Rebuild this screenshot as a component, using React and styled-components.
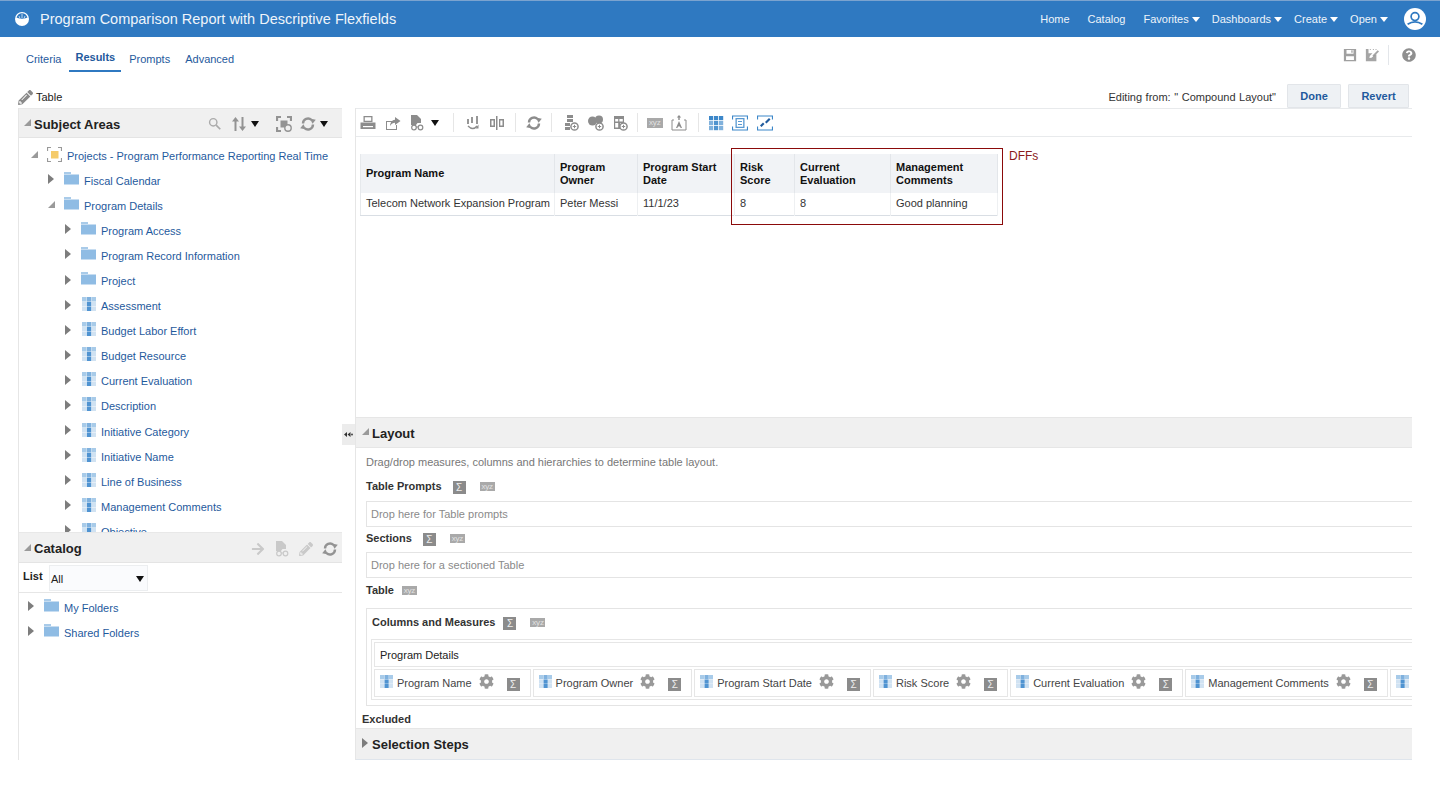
import styled, { createGlobalStyle } from 'styled-components';
import { FaCog, FaArrowRight, FaPencilAlt, FaQuestionCircle } from 'react-icons/fa';

const GlobalStyle = createGlobalStyle`
  html, body {
    margin: 0;
    padding: 0;
    background: #fff;
    font-family: "Liberation Sans", Arial, sans-serif;
    font-size: 11px;
    color: #333;
  }
  * { box-sizing: border-box; }
`;

const Page = styled.div`
  width: 1440px;
  height: 788px;
  overflow: hidden;
  background: #fff;
`;

const TopBar = styled.header`
  height: 37px;
  background: #2f79c1;
  border-top: 1px solid #7ba3cf;
  display: flex;
  align-items: center;
  padding: 0 14px 0 15px;
  color: #fff;
`;

const ReportTitle = styled.div`
  font-size: 14.5px;
  margin-left: 11px;
  color: #eef4fa;
  flex: 1;
`;

const Nav = styled.nav`
  display: flex;
  align-items: center;
  gap: 12px;
  margin-right: 16px;
  font-size: 11px;
`;

const NavItem = styled.span`
  display: inline-flex;
  align-items: center;
  gap: 3px;
  color: #eef4fa;
  margin-right: ${(p) => (p.$plain ? '6px' : '0')};
`;

const NavCaret = styled.i`
  width: 0;
  height: 0;
  border-left: 4px solid transparent;
  border-right: 4px solid transparent;
  border-top: 5px solid #fff;
`;

const TabBar = styled.div`
  height: 35px;
  display: flex;
  align-items: flex-end;
  justify-content: space-between;
  padding: 0 24px 0 19px;
`;

const Tabs = styled.div`
  display: flex;
  align-items: flex-end;
  gap: 1px;
`;

const Tab = styled.div`
  height: ${(p) => (p.$active ? '27px' : '23px')};
  padding: ${(p) => (p.$active ? '6px 6px 0' : '8px 7px 0')};
  font-size: 11px;
  font-weight: ${(p) => (p.$active ? 700 : 400)};
  color: #1f5a9d;
  border-bottom: 2px solid ${(p) => (p.$active ? '#2f79c1' : 'transparent')};
  margin-bottom: ${(p) => (p.$active ? '0' : '4px')};
  white-space: nowrap;
`;

const PageTools = styled.div`
  align-self: flex-start;
  margin-top: 8px;
  display: flex;
  align-items: center;
  gap: 8px;
  color: #8f8f8f;
`;

const ToolDivider = styled.span`
  width: 1px;
  height: 20px;
  background: #e3e6ea;
  margin: 0 5px 0 1px;
`;

const EditBar = styled.div`
  height: 36px;
  display: flex;
  align-items: flex-end;
  justify-content: space-between;
  padding: 0 31px 0 18px;
`;

const EditTitle = styled.div`
  display: flex;
  align-items: center;
  gap: 3px;
  height: 36px;
  padding-top: 14px;
  font-size: 11px;
  color: #222;
  svg { color: #8a8a8a; }
`;

const EditActions = styled.div`
  display: flex;
  align-items: center;
  color: #333;
`;

const EditingFrom = styled.span`
  margin: 2px 11px 0 0;
  word-spacing: 0.5px;
`;

const ActionButton = styled.button`
  height: 24px;
  width: ${(p) => p.$w}px;
  margin-left: ${(p) => p.$gap || 0}px;
  background: #eef1f4;
  border: 1px solid #e2e5e9;
  border-radius: 1px;
  font: 700 11px "Liberation Sans", Arial, sans-serif;
  color: #1f5a9d;
`;

const Main = styled.main`
  display: grid;
  grid-template-columns: 324px 13px 1057px;
  margin-left: 18px;
  height: 652px;
`;

const LeftPanel = styled.aside`
  border-left: 1px solid #e6e6e6;
  display: flex;
  flex-direction: column;
  min-height: 0;
`;

const PanelHeader = styled.div`
  height: ${(p) => p.$h || 30}px;
  flex: none;
  display: flex;
  align-items: center;
  background: #f0f0f0;
  border-top: 1px solid #e8e8e8;
  border-bottom: 1px solid #e4e4e4;
  padding: 2px 0 0 5px;
`;

const PanelTitle = styled.div`
  font-size: 13px;
  font-weight: 700;
  color: #222;
  margin-left: 3px;
  flex: ${(p) => (p.$grow ? 1 : 'none')};
`;

const HeaderTools = styled.div`
  display: flex;
  align-items: center;
  color: ${(p) => (p.$muted ? '#c9c9c9' : '#939393')};
`;

const HeaderTool = styled.span`
  width: 24px;
  display: flex;
  justify-content: center;
  color: ${(p) => p.$color || 'inherit'};
`;

const SmallCaret = styled.i`
  width: 0;
  height: 0;
  margin: ${(p) => p.$margin || '0 0 0 1px'};
  border-left: 4.5px solid transparent;
  border-right: 4.5px solid transparent;
  border-top: 6px solid #111;
`;

const Tree = styled.div`
  height: 394px;
  overflow: hidden;
  flex: none;
  padding-top: 5px;
`;

const TreeRow = styled.div`
  height: 25.1px;
  display: flex;
  align-items: center;
  padding-left: ${(p) => p.$indent}px;
  white-space: nowrap;
`;

const Arrow = styled.i`
  width: 0;
  height: 0;
  flex: none;
  margin-top: -3px;
  ${(p) =>
    p.$open
      ? `border-left: 7px solid transparent; border-bottom: 7px solid #9a9a9a;`
      : `border-top: 5px solid transparent; border-bottom: 5px solid transparent; border-left: 6px solid #7d7d7d; margin-right: 1px;`}
`;

const NodeIcon = styled.span`
  width: 15px;
  height: 15px;
  margin: -3px 5px 0 9px;
  flex: none;
  display: flex;
  justify-content: center;
`;

const NodeLabel = styled.span`
  font-size: 11px;
  color: #1f5a9d;
`;

const CatalogFilter = styled.div`
  height: 30px;
  flex: none;
  display: flex;
  align-items: center;
  padding-left: 4px;
  border-bottom: 1px solid #e6e6e6;
`;

const FilterLabel = styled.span`
  font-weight: 700;
  color: #222;
  width: 26px;
  margin-top: -3px;
`;

const FilterSelect = styled.div`
  width: 99px;
  height: 26px;
  background: #fafbfd;
  border: 1px solid #eceef0;
  display: flex;
  align-items: center;
  justify-content: space-between;
  padding: 2px 2px 0 1px;
  color: #222;
`;

const CatalogList = styled.div`
  padding-top: 2px;
`;

const Splitter = styled.div`
  align-self: center;
  height: 21px;
  background: #ececec;
  display: flex;
  align-items: center;
  justify-content: center;
  color: #333;
`;

const RightPanel = styled.section`
  border-left: 1px solid #e6e6e6;
  min-width: 0;
  overflow: hidden;
`;

const Toolbar = styled.div`
  height: 29px;
  display: flex;
  align-items: center;
  border-top: 1px solid #e8eaec;
  border-bottom: 1px solid #e8eaec;
  color: #8c8c8c;
`;

const ToolButton = styled.span`
  width: 24.5px;
  height: 16px;
  flex: none;
  display: flex;
  align-items: center;
  justify-content: center;
  color: ${(p) => (p.$blue ? '#3c87c9' : 'inherit')};
`;

const ToolSep = styled.span`
  width: 1px;
  height: 19px;
  flex: none;
  background: #e6e6e6;
  margin: 0 ${(p) => p.$r}px 0 ${(p) => p.$l}px;
`;

const ReportCanvas = styled.div`
  position: relative;
  height: 280px;
  padding: 17px 0 0 4px;
`;

const ResultTable = styled.table`
  border-collapse: collapse;
  table-layout: fixed;
  width: 637px;
  border-bottom: 1px solid #d9dee4;
  border-left: 1px solid #e6e9ec;
  font-size: 11px;
  th {
    height: 39px;
    background: #f1f3f6;
    border-right: 1px solid #e3e6ea;
    font-weight: 700;
    color: #111;
    text-align: left;
    padding: 0 5px;
    line-height: 13px;
  }
  td {
    height: 22px;
    border-right: 1px solid #eef0f2;
    color: #333;
    padding: 0 5px 2px;
    white-space: nowrap;
  }
`;

const Highlight = styled.div`
  position: absolute;
  left: 375px;
  top: 11px;
  width: 272px;
  height: 77px;
  border: 1px solid #8b0a0a;
  pointer-events: none;
`;

const HighlightNote = styled.div`
  position: absolute;
  left: 653px;
  top: 12px;
  font-size: 12px;
  color: #8b1a1a;
`;

const SectionHeader = styled.div`
  height: ${(p) => p.$h}px;
  display: flex;
  align-items: center;
  background: #f0f0f0;
  border-top: 1px solid #e6e6e6;
  border-bottom: 1px solid ${(p) => p.$line || '#e6e6e6'};
  padding: ${(p) => p.$top || 0}px 0 0 6px;
`;

const LayoutBody = styled.div`
  padding-left: 10px;
`;

const Hint = styled.div`
  height: 27px;
  display: flex;
  align-items: center;
  color: #777;
`;

const DropLabel = styled.div`
  height: ${(p) => p.$h || 26}px;
  padding-top: ${(p) => p.$top || 4}px;
  display: flex;
  align-items: flex-start;
  font-weight: 700;
  color: #333;
  line-height: 14px;
`;

const DropZone = styled.div`
  height: 26px;
  border: 1px solid #e4e4e4;
  border-right: 0;
  display: flex;
  align-items: center;
  padding-left: 4px;
  color: #8a8a8a;
`;

const Sigma = styled.span`
  width: 13px;
  height: 13px;
  margin: ${(p) => p.$margin || '2px 0 0 11px'};
  flex: none;
  background: #8b8b8b;
  color: #eee;
  font-size: 10px;
  font-weight: 400;
  line-height: 13px;
  text-align: center;
`;

const Xyz = styled.span`
  width: ${(p) => p.$w || 15}px;
  height: ${(p) => p.$tall || 9}px;
  margin: ${(p) => p.$margin || '3px 0 0 14px'};
  flex: none;
  background: #a9a9a9;
  color: #e2e2e2;
  font-size: 8px;
  font-weight: 400;
  line-height: ${(p) => p.$tall || 9}px;
  text-align: center;
  letter-spacing: -0.2px;
`;

const ColumnsBox = styled.div`
  height: 98px;
  border: 1px solid #e4e4e4;
  border-right: 0;
  padding-left: 4px;
`;

const ColumnsLabel = styled(DropLabel)`
  height: 30px;
  padding: 6px 0 0 1px;
`;

const DetailsBox = styled.div`
  border: 1px solid #e6e6e6;
  border-right: 0;
  padding: 2px 0 2px 2px;
  height: 61px;
  overflow: hidden;
`;

const DetailsHeader = styled.div`
  height: 25px;
  border: 1px solid #e6e6e6;
  border-right: 0;
  display: flex;
  align-items: center;
  padding-left: 5px;
  color: #222;
`;

const ColumnRow = styled.div`
  display: flex;
  gap: 2px;
  margin-top: 2px;
`;

const ColumnChip = styled.div`
  height: 28px;
  flex: none;
  border: 1px solid #e6e6e6;
  display: flex;
  align-items: center;
  padding: 0 10px 0 5px;
  color: #444;
  white-space: nowrap;
`;

const ChipIcon = styled.span`
  width: 13px;
  height: 13px;
  margin: -3px 4px 0 0;
  display: flex;
`;

const ChipGear = styled.span`
  display: flex;
  margin: -4px 0 0 7px;
  color: #999;
`;

const ExcludedLabel = styled.div`
  height: 22px;
  margin-left: -4px;
  display: flex;
  align-items: center;
  font-weight: 700;
  color: #333;
  padding-top: 4px;
`;

const Svg = ({ size = 16, children }) => (
  <svg width={size} height={size} viewBox="0 0 16 16" fill="currentColor">
    {children}
  </svg>
);

const Logo = () => (
  <svg width="14" height="14" viewBox="0 0 14 14">
    <circle cx="7" cy="7" r="7" fill="#fff" />
    <path d="M1.5 5.5 Q7 8 12.5 5.5 Q11 1.2 7 1.2 Q3 1.2 1.5 5.5Z" fill="#2f79c1" />
    <path d="M7 2v4M4 4l1 2.5M10 4l-1 2.5" stroke="#fff" strokeWidth="0.7" />
  </svg>
);

const Avatar = () => (
  <svg width="22" height="22" viewBox="0 0 22 22">
    <circle cx="11" cy="11" r="11" fill="#fff" />
    <circle cx="11" cy="8.6" r="3.9" fill="none" stroke="#2f79c1" strokeWidth="1.7" />
    <path d="M3.6 16.2 Q11 11.5 18.4 16.2" fill="none" stroke="#2f79c1" strokeWidth="1.8" />
  </svg>
);

const Folder = () => (
  <svg width="15" height="13" viewBox="0 0 15 13">
    <rect x="0" y="0" width="7" height="2" fill="#a9cbe9" />
    <rect x="0" y="2.5" width="15" height="10" fill="#8fbce4" />
  </svg>
);

const GridIcon = ({ size = 13 }) => (
  <svg width={size} height={size} viewBox="0 0 13 13">
    {[0, 4.5, 9].map((y) =>
      [0, 4.5, 9].map((x) => (
        <rect
          key={`${x}-${y}`}
          x={x}
          y={y}
          width="4.2"
          height="4.2"
          fill={x === 4.5 ? (y === 0 ? '#7fb1de' : '#4f93d1') : y === 0 ? '#a8cbe9' : '#d0e2f2'}
        />
      ))
    )}
  </svg>
);

const SubjectIcon = () => (
  <svg width="15" height="15" viewBox="0 0 15 15">
    <rect x="4" y="4" width="7.5" height="7.5" fill="#f5cb6a" />
    <path d="M0.5 4V0.5H4M11 0.5H14.5V4M14.5 11V14.5H11M4 14.5H0.5V11" fill="none" stroke="#999" strokeWidth="1.2" />
  </svg>
);

const SearchIcon = () => (
  <Svg size={14}>
    <circle cx="6" cy="6" r="4.2" fill="none" stroke="#aaa" strokeWidth="1.6" />
    <path d="M9.3 9.3 14 14" stroke="#aaa" strokeWidth="2" />
  </Svg>
);

const SyncIcon = ({ size = 16 }) => (
  <Svg size={size}>
    <path d="M3 7.5A5 5 0 0 1 11.5 4" fill="none" stroke="currentColor" strokeWidth="2.4" />
    <path d="M13 7.5 15.5 3H9.5z" transform="rotate(10 12 5)" />
    <path d="M13 8.5A5 5 0 0 1 4.5 12" fill="none" stroke="currentColor" strokeWidth="2.4" />
    <path d="M3 8.5.5 13h6z" transform="rotate(10 4 11)" />
  </Svg>
);

const SaveIcon = () => (
  <Svg size={14}>
    <path d="M1 1h14v14H1zM4 2.2v4.3h8V2.2zM3.5 9.5v4.3h9V9.5z" fillRule="evenodd" opacity="0.85" />
    <path d="M9.5 2.5h1.5v3H9.5z" opacity="0.85" />
  </Svg>
);

const SaveAsIcon = () => (
  <Svg size={14}>
    <path d="M1 1h3v5h4.5L5.5 9 5 11.5l2.5-.5L11 8l2-1v8H1z" opacity="0.8" />
    <path d="M8.5 8.5 14.5 2.5 16 4 10 10z" opacity="0.8" />
    <path d="M9 1h1.2v1.2H9zM12 1h1.2v1.2H12zM5.5 1h1.2v1.2H5.5z" opacity="0.7" />
  </Svg>
);

const PrintIcon = () => (
  <Svg>
    <path d="M3.5 1h9v6h-9zM4.8 2.3v3.5h6.4V2.3z" fillRule="evenodd" />
    <path d="M0.5 7.5h15v6.5H0.5z" />
    <path d="M3 11h10v1.2H3z" fill="#fff" />
  </Svg>
);

const ExportIcon = () => (
  <Svg>
    <path d="M1 6h6v1H2v7h9v-4h1v5H1z" />
    <path d="M10 2 15.5 6 10 10V7.8C8 7.8 6.5 8.5 5 11 5.2 7.5 7 5 10 4.7z" />
  </Svg>
);

const DocGlassesIcon = () => (
  <Svg>
    <path d="M2 0h6l4 4v4H8.5L7 10H2z" />
    <circle cx="5" cy="12.5" r="2.3" fill="none" stroke="currentColor" strokeWidth="1.2" />
    <circle cx="11.5" cy="12.5" r="2.3" fill="none" stroke="currentColor" strokeWidth="1.2" />
    <path d="M7 12h2" stroke="currentColor" />
  </Svg>
);

const PivotIcon = () => (
  <Svg>
    <path d="M2 4h2v5H2zM6 2h2v6H6zM11 1h2v8h-2z" opacity="0.9" />
    <path d="M3 11 Q8 16 12 11" fill="none" stroke="currentColor" strokeWidth="1.4" />
    <path d="M13.5 9.5v4h-3z" />
  </Svg>
);

const ColumnsIcon = () => (
  <Svg>
    <path d="M1 4h5v8H1zM2.5 5.5v5h2v-5z" fillRule="evenodd" />
    <path d="M7 1h1.5v14H7z" />
    <path d="M10 4h5v8h-5zM11.3 5.5v5h2.2v-5z" fillRule="evenodd" />
  </Svg>
);

const AddBadge = () => (
  <>
    <circle cx="11.5" cy="11.5" r="3.6" fill="#fff" stroke="currentColor" strokeWidth="1.5" />
    <path d="M9.8 11.5h3.4M11.5 9.8v3.4" stroke="currentColor" />
  </>
);

const AddLayersIcon = () => (
  <Svg>
    <path d="M4 0h6v3H4zM4 4h6v3H4zM2 8h5v3H2zM2 12h5v3H2z" />
    <AddBadge />
  </Svg>
);

const AddPieIcon = () => (
  <Svg>
    <circle cx="4.5" cy="6" r="4.5" />
    <circle cx="11" cy="4.5" r="4" />
    <AddBadge />
  </Svg>
);

const AddTableIcon = () => (
  <Svg>
    <path d="M2 1h10v7H8v6H2zM3.2 4v2.5h3V4zM7.4 4v2.5h3.4V4zM3.2 8v4.5h3V8z" fillRule="evenodd" />
    <AddBadge />
  </Svg>
);

const TextBoxIcon = () => (
  <Svg>
    <path d="M3 5H1V15H15V5H13" fill="none" stroke="currentColor" strokeWidth="1" />
    <path d="M8 0 5.8 2.6h1.5V5h1.4V2.6h1.5z" />
    <path d="M5 13 8 6l3 7H9.6L9 11.4H7L6.4 13z" />
  </Svg>
);

const BlueGridIcon = () => (
  <Svg>
    {[1, 6, 11].map((y) =>
      [1, 6, 11].map((x) => (
        <rect key={`${x}-${y}`} x={x} y={y} width="4.2" height="4.2" opacity={y === 1 ? 1 : x === 6 ? 0.9 : 0.65} />
      ))
    )}
  </Svg>
);

const BlueFrameIcon = () => (
  <Svg>
    <path d="M0.5 4.5V1h15v3.5M0.5 11.5V15h15v-3.5" fill="none" stroke="currentColor" strokeWidth="1.2" />
    <path d="M3.5 3h9v10h-9zM4.8 4.3v7.4h6.4V4.3z" fillRule="evenodd" opacity="0.85" />
    <path d="M6 6h4v1H6zM6 9h4v1H6z" opacity="0.85" />
  </Svg>
);

const BlueChartIcon = () => (
  <Svg>
    <path d="M0.5 4.5V1h15v3.5M0.5 11.5V15h15v-3.5" fill="none" stroke="currentColor" strokeWidth="1.2" />
    <path d="M3 10.5 6 7.5l1.5 1.5L4.5 12zM8 7l4-4 1.5 1.5-4 4z" fill="#1f5a9d" />
  </Svg>
);

const SortIcon = () => (
  <Svg>
    <path d="M4.5 1 8 5.5H5.5V15h-2V5.5H1z" />
    <path d="M11.5 15 8 10.5h2.5V1h2v9.5H15z" />
  </Svg>
);

const FocusAddIcon = () => (
  <Svg>
    <path d="M1 5V1h4M11 1h4v4M1 11v4h4" fill="none" stroke="currentColor" strokeWidth="2.2" />
    <rect x="4.5" y="4.5" width="7" height="7" />
    <circle cx="12" cy="12" r="3.2" fill="#f0f0f0" stroke="currentColor" strokeWidth="1.4" />
  </Svg>
);

const CollapseHandle = () => (
  <svg width="9" height="5" viewBox="0 0 9 5" fill="currentColor">
    <path d="M0 2.5 3 0v5zM3.5 2.5 6.5 0v5z" />
    <circle cx="8" cy="2.5" r="0.9" />
  </svg>
);

const treeNodes = [
  { label: 'Program Access', icon: 'folder' },
  { label: 'Program Record Information', icon: 'folder' },
  { label: 'Project', icon: 'folder' },
  { label: 'Assessment' },
  { label: 'Budget Labor Effort' },
  { label: 'Budget Resource' },
  { label: 'Current Evaluation' },
  { label: 'Description' },
  { label: 'Initiative Category' },
  { label: 'Initiative Name' },
  { label: 'Line of Business' },
  { label: 'Management Comments' },
  { label: 'Objective' },
];

const columnChips = [
  'Program Name',
  'Program Owner',
  'Program Start Date',
  'Risk Score',
  'Current Evaluation',
  'Management Comments',
];

const tableCols = [194, 83, 97, 60, 96, 107];

const Node = ({ indent, open, icon, label }) => (
  <TreeRow $indent={indent}>
    <Arrow $open={open} />
    <NodeIcon>{icon}</NodeIcon>
    <NodeLabel>{label}</NodeLabel>
  </TreeRow>
);

export default function App() {
  return (
    <Page>
      <GlobalStyle />
      <TopBar>
        <Logo />
        <ReportTitle>Program Comparison Report with Descriptive Flexfields</ReportTitle>
        <Nav>
          <NavItem $plain>Home</NavItem>
          <NavItem $plain>Catalog</NavItem>
          <NavItem>Favorites<NavCaret /></NavItem>
          <NavItem>Dashboards<NavCaret /></NavItem>
          <NavItem>Create<NavCaret /></NavItem>
          <NavItem>Open<NavCaret /></NavItem>
        </Nav>
        <Avatar />
      </TopBar>

      <TabBar>
        <Tabs>
          <Tab>Criteria</Tab>
          <Tab $active>Results</Tab>
          <Tab>Prompts</Tab>
          <Tab>Advanced</Tab>
        </Tabs>
        <PageTools>
          <SaveIcon />
          <SaveAsIcon />
          <ToolDivider />
          <FaQuestionCircle size={14} />
        </PageTools>
      </TabBar>

      <EditBar>
        <EditTitle>
          <FaPencilAlt size={15} />
          Table
        </EditTitle>
        <EditActions>
          <EditingFrom>Editing from: " Compound Layout"</EditingFrom>
          <ActionButton $w={54}>Done</ActionButton>
          <ActionButton $w={61} $gap={7}>Revert</ActionButton>
        </EditActions>
      </EditBar>

      <Main>
        <LeftPanel>
          <PanelHeader>
            <Arrow $open />
            <PanelTitle $grow>Subject Areas</PanelTitle>
            <HeaderTools>
              <HeaderTool><SearchIcon /></HeaderTool>
              <HeaderTool><SortIcon /></HeaderTool>
              <SmallCaret $margin="0 13px 0 0" />
              <HeaderTool><FocusAddIcon /></HeaderTool>
              <HeaderTool><SyncIcon /></HeaderTool>
              <SmallCaret $margin="0 14px 0 0" />
            </HeaderTools>
          </PanelHeader>
          <Tree>
            <Node indent={12} open icon={<SubjectIcon />} label="Projects - Program Performance Reporting Real Time" />
            <Node indent={29} icon={<Folder />} label="Fiscal Calendar" />
            <Node indent={29} open icon={<Folder />} label="Program Details" />
            {treeNodes.map((node) => (
              <Node
                key={node.label}
                indent={46}
                label={node.label}
                icon={node.icon === 'folder' ? <Folder /> : <GridIcon size={14} />}
              />
            ))}
          </Tree>
          <PanelHeader $h={31}>
            <Arrow $open />
            <PanelTitle $grow>Catalog</PanelTitle>
            <HeaderTools $muted>
              <HeaderTool><FaArrowRight size={14} /></HeaderTool>
              <HeaderTool><DocGlassesIcon /></HeaderTool>
              <HeaderTool><FaPencilAlt size={14} /></HeaderTool>
              <HeaderTool $color="#939393"><SyncIcon /></HeaderTool>
            </HeaderTools>
          </PanelHeader>
          <CatalogFilter>
            <FilterLabel>List</FilterLabel>
            <FilterSelect>
              All
              <SmallCaret $margin="0 1px 0 0" />
            </FilterSelect>
          </CatalogFilter>
          <CatalogList>
            <Node indent={9} icon={<Folder />} label="My Folders" />
            <Node indent={9} icon={<Folder />} label="Shared Folders" />
          </CatalogList>
        </LeftPanel>

        <Splitter><CollapseHandle /></Splitter>

        <RightPanel>
          <Toolbar>
            <ToolButton><PrintIcon /></ToolButton>
            <ToolButton><ExportIcon /></ToolButton>
            <ToolButton><DocGlassesIcon /></ToolButton>
            <SmallCaret $margin="0 0 0 1px" />
            <ToolSep $l={14} $r={7} />
            <ToolButton><PivotIcon /></ToolButton>
            <ToolButton><ColumnsIcon /></ToolButton>
            <ToolSep $l={5} $r={6} />
            <ToolButton><SyncIcon /></ToolButton>
            <ToolSep $l={5} $r={7} />
            <ToolButton><AddLayersIcon /></ToolButton>
            <ToolButton><AddPieIcon /></ToolButton>
            <ToolButton><AddTableIcon /></ToolButton>
            <ToolSep $l={4} $r={5} />
            <ToolButton><Xyz $w={16} $tall={10} $margin="0">xyz</Xyz></ToolButton>
            <ToolButton><TextBoxIcon /></ToolButton>
            <ToolSep $l={6} $r={5} />
            <ToolButton $blue><BlueGridIcon /></ToolButton>
            <ToolButton $blue><BlueFrameIcon /></ToolButton>
            <ToolButton $blue><BlueChartIcon /></ToolButton>
          </Toolbar>

          <ReportCanvas>
            <ResultTable>
              <colgroup>
                {tableCols.map((w, i) => (
                  <col key={i} style={{ width: w }} />
                ))}
              </colgroup>
              <thead>
                <tr>
                  <th>Program Name</th>
                  <th>Program<br />Owner</th>
                  <th>Program Start<br />Date</th>
                  <th>Risk<br />Score</th>
                  <th>Current<br />Evaluation</th>
                  <th>Management<br />Comments</th>
                </tr>
              </thead>
              <tbody>
                <tr>
                  <td>Telecom Network Expansion Program</td>
                  <td>Peter Messi</td>
                  <td>11/1/23</td>
                  <td>8</td>
                  <td>8</td>
                  <td>Good planning</td>
                </tr>
              </tbody>
            </ResultTable>
            <Highlight />
            <HighlightNote>DFFs</HighlightNote>
          </ReportCanvas>

          <SectionHeader $h={31} $top={1}>
            <Arrow $open />
            <PanelTitle>Layout</PanelTitle>
          </SectionHeader>
          <LayoutBody>
            <Hint>Drag/drop measures, columns and hierarchies to determine table layout.</Hint>
            <DropLabel>
              Table Prompts
              <Sigma>Σ</Sigma>
              <Xyz>xyz</Xyz>
            </DropLabel>
            <DropZone>Drop here for Table prompts</DropZone>
            <DropLabel $h={25}>
              Sections
              <Sigma>Σ</Sigma>
              <Xyz>xyz</Xyz>
            </DropLabel>
            <DropZone>Drop here for a sectioned Table</DropZone>
            <DropLabel $h={30} $top={5}>
              Table
              <Xyz $margin="3px 0 0 8px">xyz</Xyz>
            </DropLabel>
            <ColumnsBox>
              <ColumnsLabel>
                Columns and Measures
                <Sigma $margin="2px 0 0 8px">Σ</Sigma>
                <Xyz>xyz</Xyz>
              </ColumnsLabel>
              <DetailsBox>
                <DetailsHeader>Program Details</DetailsHeader>
                <ColumnRow>
                  {columnChips.map((name) => (
                    <ColumnChip key={name}>
                      <ChipIcon><GridIcon /></ChipIcon>
                      {name}
                      <ChipGear><FaCog size={15} /></ChipGear>
                      <Sigma $margin="3px 0 0 13px">Σ</Sigma>
                    </ColumnChip>
                  ))}
                  <ColumnChip>
                    <ChipIcon><GridIcon /></ChipIcon>
                  </ColumnChip>
                </ColumnRow>
              </DetailsBox>
            </ColumnsBox>
            <ExcludedLabel>Excluded</ExcludedLabel>
          </LayoutBody>
          <SectionHeader $h={32} $line="#dfe5ec">
            <Arrow />
            <PanelTitle>Selection Steps</PanelTitle>
          </SectionHeader>
        </RightPanel>
      </Main>
    </Page>
  );
}
